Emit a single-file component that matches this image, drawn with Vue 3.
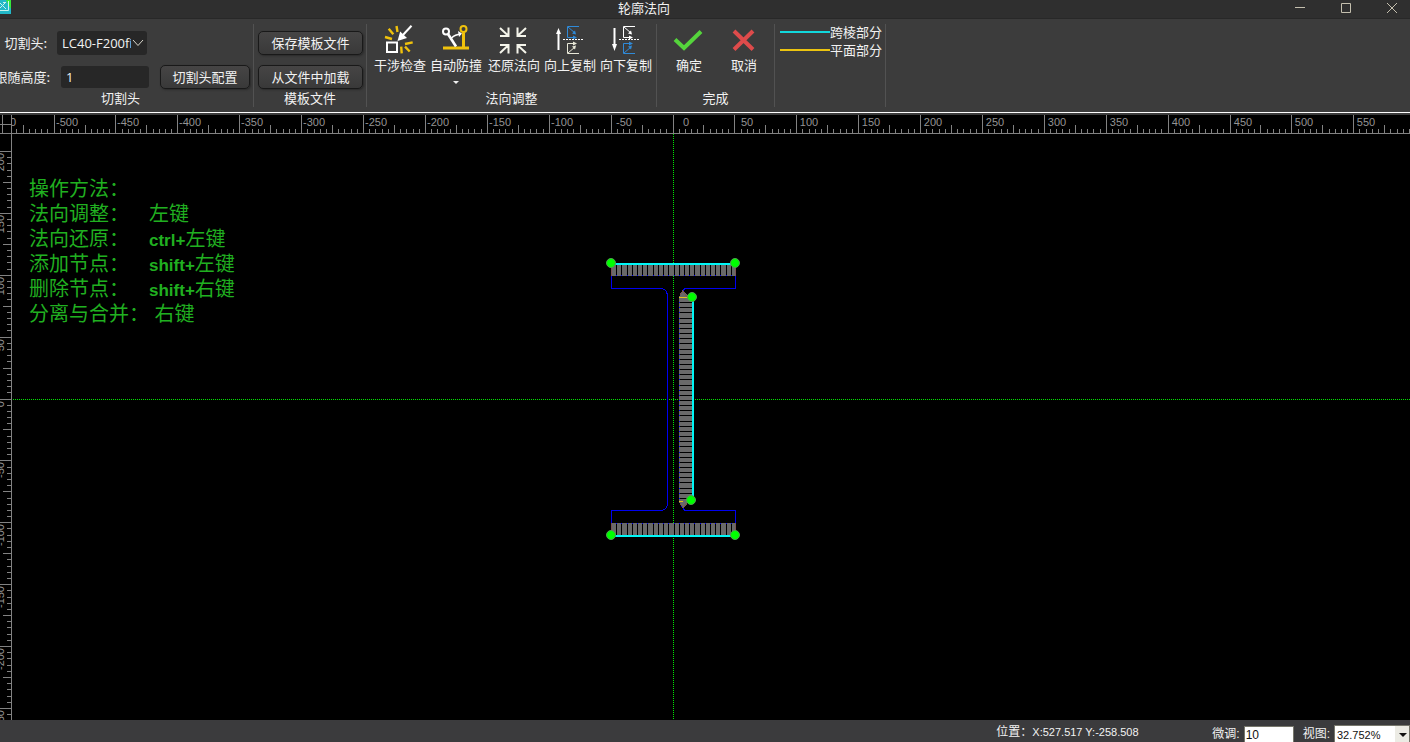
<script setup>
import { ref } from 'vue'

const head = ref('LC40-F200fiber')
const height = ref('1')
const step = ref('10')
const zoom = ref('32.752%')

const ORIGIN_X = 673
const ORIGIN_Y = 284
const STEP = 61.89

const buildTicks = (origin, from, to, sign) => {
  const out = []
  for (let i = from * 10; i <= to * 10; i++) {
    const pos = Math.floor(origin + (sign * i * STEP) / 10)
    const kind = i % 10 === 0 ? 'major' : i % 5 === 0 ? 'mid' : 'minor'
    out.push({ pos, kind, label: kind === 'major' ? String(i * 5) : '' })
  }
  return out
}
const xTicks = buildTicks(ORIGIN_X, -11, 30, 1)
const yTicks = buildTicks(ORIGIN_Y, -20, 4, -1).filter((t) => t.pos > 20)
const xLen = { major: 0, mid: 10, minor: 14 }
const yLen = { major: 0, mid: 3, minor: 7 }

// Hatch bars fill each interval except for a one-pixel gap.
const buildBars = (start, end, count) => {
  const at = (i) => Math.round(start + (i * (end - start)) / count)
  return Array.from({ length: count }, (_, i) => ({ pos: at(i), size: at(i + 1) - at(i) - 1 }))
}
const flangeBars = buildBars(612, 737, 24)
const webBars = buildBars(183, 389, 40)
const nodes = [
  [611, 148], [735, 148], [692, 182], [691, 385], [611, 420], [735, 420],
]

const help = [
  ['操作方法：', '', ''],
  ['法向调整：', '', '左键'],
  ['法向还原：', 'ctrl+', '左键'],
  ['添加节点：', 'shift+', '左键'],
  ['删除节点：', 'shift+', '右键'],
  ['分离与合并：', '', ' 右键'],
]
</script>

<template>
  <div class="window">
    <header class="titlebar">
      <svg class="logo" width="11" height="14" viewBox="0 0 11 14">
        <rect width="11" height="14" fill="#22b8c8" />
        <path d="M6 0H11V9L8 4Z" fill="#35e83a" />
        <path d="M0 10.500H8.500V1M0 3L6 9M5 3L0 8M3 2.500H6" fill="none" stroke="#c8f4ee" />
      </svg>
      <h1>轮廓法向</h1>
      <div class="controls">
        <button aria-label="最小化"><svg width="12" height="12"><path d="M1 5.500H11" /></svg></button>
        <button aria-label="最大化"><svg width="12" height="12"><path d="M1.500 1.500H10.500V10.500H1.500Z" /></svg></button>
        <button aria-label="关闭"><svg width="12" height="12"><path d="M1 1L11 11M11 1L1 11" /></svg></button>
      </div>
    </header>

    <div class="ribbon">
      <section class="group head-group">
        <div class="rows">
          <div class="row">
            <label class="lab1" for="head">切割头:</label>
            <div class="combo">
              <select id="head" v-model="head"><option>LC40-F200fiber</option></select>
              <svg width="12" height="8"><path d="M1 1L6 6.500L11 1" /></svg>
            </div>
          </div>
          <div class="row">
            <label class="lab2" for="height">跟随高度:</label>
            <input id="height" v-model="height" class="field" type="text" />
            <button class="btn config">切割头配置</button>
          </div>
        </div>
        <h2>切割头</h2>
      </section>

      <section class="group file-group">
        <div class="rows">
          <button class="btn">保存模板文件</button>
          <button class="btn">从文件中加载</button>
        </div>
        <h2>模板文件</h2>
      </section>

      <section class="group normal-group">
        <div class="tools">
          <button class="tool">
            <svg width="32" height="32" fill="none">
              <path d="M12.500 2L13.500 8M4.700 4.700L9.300 10.300M1 13L8 15M21 20L28.700 18.300M21 22.700L25.700 27.500M17.200 22.700L17.700 29.300" stroke="#f0c20c" stroke-width="2.400" />
              <rect x="3" y="18.500" width="10" height="9.500" stroke="#fff" stroke-width="2" />
              <path d="M27.500 1.700L18 12" stroke="#fff" stroke-width="2" />
              <path d="M13.500 17L16.200 7.500L23 14Z" fill="#fff" />
            </svg>
            <span>干涉检查</span>
          </button>
          <button class="tool">
            <svg width="32" height="32" fill="none">
              <path d="M3 24H29M23.500 8.500V23" stroke="#f0c20c" stroke-width="3" />
              <circle cx="23.500" cy="5" r="3" stroke="#f0c20c" stroke-width="2" />
              <circle cx="6" cy="7.500" r="3" stroke="#fff" stroke-width="2" />
              <path d="M8 10L16 22.500" stroke="#fff" stroke-width="2.600" />
              <path d="M11.500 14Q15 10.500 21 10" stroke="#fff" stroke-width="1.500" />
              <path d="M18 7L22 9.500L19 13Z" fill="#fff" />
            </svg>
            <span>自动防撞</span>
            <i class="drop"></i>
          </button>
          <button class="tool restore">
            <svg width="32" height="32" fill="none" stroke="#f4f4ea" stroke-width="2">
              <path d="M2 12H10.500V3.500M2 4L10 11.500M28 12H19.500V3.500M28 4L20 11.500M2 21H10.500V29.500M2 29L10 21.500M28 21H19.500V29.500M28 29L20 21.500" />
            </svg>
            <span>还原法向</span>
          </button>
          <button class="tool">
            <svg width="32" height="32" fill="none">
              <path d="M4.500 26V8" stroke="#fff" stroke-width="2" />
              <path d="M2 10L4.500 4L7 10Z" fill="#fff" />
              <g stroke="#2f8ad8">
                <path d="M25 2.500H13.500V13.500H20M14 3L21 9" />
                <path d="M22 10.500L18 9.500L21 6.500ZM23 13.500L19 11.500V15.500Z" fill="#2f8ad8" stroke="none" />
              </g>
              <path d="M9 15.500H30" stroke="#fff" stroke-dasharray="2 1" />
              <g stroke="#e8e8d8">
                <path d="M25 29.500H13.500V19.500H20M14 29L21 23" />
                <path d="M22 21.500L18 22.500L21 25.500ZM23 19.500L19 17.500V21.500Z" fill="#e8e8d8" stroke="none" />
              </g>
            </svg>
            <span>向上复制</span>
          </button>
          <button class="tool">
            <svg width="32" height="32" fill="none">
              <path d="M4.500 4V22" stroke="#fff" stroke-width="2" />
              <path d="M2 20L4.500 27L7 20Z" fill="#fff" />
              <g stroke="#fff">
                <path d="M25 2.500H13.500V13.500H20M14 3L21 9" />
                <path d="M22 10.500L18 9.500L21 6.500ZM23 13.500L19 11.500V15.500Z" fill="#fff" stroke="none" />
              </g>
              <path d="M9 15.500H30" stroke="#fff" stroke-dasharray="2 1" />
              <g stroke="#2f8ad8">
                <path d="M25 29.500H13.500V19.500H20M14 29L21 23" />
                <path d="M22 21.500L18 22.500L21 25.500ZM23 19.500L19 17.500V21.500Z" fill="#2f8ad8" stroke="none" />
              </g>
            </svg>
            <span>向下复制</span>
          </button>
        </div>
        <h2>法向调整</h2>
      </section>

      <section class="group done-group">
        <div class="tools">
          <button class="tool">
            <svg width="32" height="32" fill="none"><path d="M2 15.500L11 24L28 7.500" stroke="#55d43c" stroke-width="4" /></svg>
            <span>确定</span>
          </button>
          <button class="tool">
            <svg width="32" height="32" fill="none"><path d="M6 7L25 25.500M25 7L6 25.500" stroke="#de4b4b" stroke-width="4" /></svg>
            <span>取消</span>
          </button>
        </div>
        <h2>完成</h2>
      </section>

      <section class="group legend">
        <div><i class="edge"></i>跨棱部分</div>
        <div><i class="plane"></i>平面部分</div>
      </section>
    </div>

    <main class="workspace">
      <svg class="drawing" width="100%" height="100%">
        <defs>
          <clipPath id="rulerClip"><rect x="12" y="0" width="100%" height="19" /></clipPath>
        </defs>

        <g class="axis">
          <line :x1="ORIGIN_X + 0.5" y1="19" :x2="ORIGIN_X + 0.5" y2="100%" />
          <line x1="13" :y1="ORIGIN_Y + 0.5" x2="100%" :y2="ORIGIN_Y + 0.5" />
        </g>

        <g class="shade">
          <rect x="612" y="150" width="124" height="11" />
          <rect x="612" y="408" width="124" height="12" />
          <rect x="679" y="183" width="13" height="205" />
        </g>

        <g class="outline">
          <path d="M611.500 149V173.500H662Q667.500 175 667.500 182V388Q667.500 394 662 395.500H611.500V420" />
          <path d="M735.500 149V173.500H685L681 178M735.500 420V395.500H685L681 391M612 160.500H735M612 408.500H735M679.500 182V386" />
        </g>

        <g class="bars">
          <rect v-for="b in flangeBars" :key="'t' + b.pos" :x="b.pos" y="150" :width="b.size" height="11" />
          <rect v-for="b in flangeBars" :key="'b' + b.pos" :x="b.pos" y="408" :width="b.size" height="12" />
          <rect v-for="b in webBars" :key="'w' + b.pos" x="679" :y="b.pos" width="13" :height="b.size" />
          <path d="M679 182L683 176L690 182ZM679 386L683 392L690 386Z" />
        </g>
        <g class="corner">
          <path d="M680 180L683 176M682 175L688 183M680 388L683 393M683 393L689 386M611.500 152V161M735.500 152V161M611.500 408V417M735.500 408V417" />
        </g>
        <path class="flat" d="M679 182.500H688M679 386.500H683" />
        <path class="cut" d="M611 149H735M611 421H735M693 182V385" />
        <g class="nodes">
          <circle v-for="(n, i) in nodes" :key="i" :cx="n[0]" :cy="n[1]" r="4.500" />
        </g>

        <g class="ruler">
          <path d="M0 18.500H12M2.500 0V18M0 9.500H12M11.500 0V18" />
          <line x1="0" y1="18.500" x2="100%" y2="18.500" />
          <line x1="11.500" y1="18" x2="11.500" y2="100%" />
          <g clip-path="url(#rulerClip)">
            <template v-for="t in xTicks" :key="t.pos">
              <line :x1="t.pos + 0.5" :y1="xLen[t.kind]" :x2="t.pos + 0.5" y2="18" />
              <text v-if="t.label" :x="t.pos + 13" y="11" text-anchor="middle">{{ t.label }}</text>
            </template>
          </g>
          <template v-for="t in yTicks" :key="t.pos">
            <line :x1="yLen[t.kind]" :y1="t.pos + 0.5" x2="11" :y2="t.pos + 0.5" />
            <text v-if="t.label" :transform="`translate(4 ${t.pos + 2}) rotate(-90)`" text-anchor="end">{{ t.label }}</text>
          </template>
        </g>
      </svg>

      <ul class="help">
        <li v-for="h in help" :key="h[0]"><span>{{ h[0] }}</span><b>{{ h[1] }}</b>{{ h[2] }}</li>
      </ul>
    </main>

    <footer class="status">
      <output class="position">位置：<span>X:527.517 Y:-258.508</span></output>
      <label for="step">微调:</label>
      <input id="step" v-model="step" type="text" />
      <label for="zoom">视图:</label>
      <div class="zoom">
        <select id="zoom" v-model="zoom"><option>32.752%</option></select>
        <i></i>
      </div>
    </footer>
  </div>
</template>

<style>
body {
  margin: 0;
  background: #000;
}
</style>

<style scoped>
.window {
  display: flex;
  flex-direction: column;
  height: 100vh;
  overflow: hidden;
  background: #3c3c3c;
  color: #f2f2f2;
  font: 13px/18px "Noto Sans CJK SC", sans-serif;
  white-space: nowrap;
}
button, input, select {
  font: inherit;
  color: inherit;
  margin: 0;
  padding: 0;
  border: 0;
  background: none;
  box-sizing: border-box;
  outline: none;
}
select { appearance: none; }
h1, h2 {
  margin: 0;
  font-size: 13px;
  font-weight: 400;
  text-align: center;
}
.titlebar {
  display: flex;
  flex: none;
  height: 18px;
  background: #2f2f2f;
  border-bottom: 1px solid #282828;
}
.titlebar h1 {
  flex: 1;
  line-height: 16px;
}
.controls {
  display: flex;
  margin-right: -5px;
}
.controls button {
  display: flex;
  justify-content: center;
  width: 46px;
  padding-top: 2px;
}
.controls svg {
  fill: none;
  stroke: #c4bfae;
}
.ribbon {
  display: flex;
  flex: none;
  box-sizing: border-box;
  height: 96px;
  padding-top: 5px;
  border-bottom: 2px solid #3c3c3c;
  box-shadow: inset 0 -1px #fff;
}
.group {
  display: flex;
  flex-direction: column;
  justify-content: space-between;
  box-sizing: border-box;
  height: 83px;
  border-right: 1px solid #525252;
}
.group h2 { line-height: 18px; }
.head-group { width: 254px; }
.head-group h2 { padding-right: 12px; }
.file-group { width: 113px; }
.normal-group { width: 290px; }
.done-group { width: 118px; }
.rows {
  display: flex;
  flex-direction: column;
  gap: 10px;
  padding: 7px 3px 0 4px;
}
.head-group .rows { padding-left: 0; }
.row {
  display: flex;
  align-items: center;
  height: 24px;
}
.lab1, .lab2 {
  display: flex;
  justify-content: flex-end;
  flex: none;
}
.lab1 { width: 47px; }
.lab2 { width: 50px; }
.combo {
  position: relative;
  width: 90px;
  height: 24px;
  margin-left: 10px;
}
.combo select {
  width: 100%;
  height: 100%;
  padding: 0 16px 0 5px;
  border-radius: 3px;
  background: #272727;
  font-family: "Open Sans", sans-serif;
}
.combo svg {
  position: absolute;
  top: 8px;
  right: 3px;
  fill: none;
  stroke: #d8d6cc;
}
.field {
  width: 88px;
  height: 22px;
  margin: 0 11px;
  padding-left: 5px;
  border-radius: 3px;
  background: #272727;
  font-family: "Open Sans", sans-serif;
}
.btn {
  height: 24px;
  border: 1px solid #191919;
  border-radius: 5px;
  background: linear-gradient(#464545, #393939);
  box-shadow: 1px 1px 2px #2a2a2a;
}
.config { width: 90px; }
.tools { display: flex; }
.normal-group .tools {
  padding-left: 7px;
  gap: 4px;
}
.done-group .tools {
  padding-left: 6px;
  gap: 3px;
}
.tool {
  display: flex;
  flex-direction: column;
  align-items: center;
  width: 52px;
}
.tool svg { display: block; }
.restore { margin-left: 2px; }
.drop {
  margin-top: 7px;
  border: 3px solid transparent;
  border-top-color: #f0f0f0;
  border-bottom: 0;
}
.legend {
  justify-content: flex-start;
  padding: 0 3px 0 5px;
}
.legend div {
  display: flex;
  align-items: center;
  height: 19px;
  line-height: 18px;
}
.legend div:first-child { height: 16px; }
.legend i {
  width: 50px;
  height: 2px;
}
.edge { background: #12d8dc; }
.plane { background: #ecc410; }
.workspace {
  position: relative;
  flex: 1;
  min-height: 0;
  overflow: hidden;
  background: #000;
}
.drawing {
  position: absolute;
  inset: 0;
  shape-rendering: crispEdges;
}
.axis line {
  stroke: #00e800;
  stroke-dasharray: 1 1;
}
.shade { fill: #000; }
.outline path {
  fill: none;
  stroke: #0000f0;
}
.bars { fill: #696969; }
.corner path {
  fill: none;
  stroke: #795454;
}
.flat {
  stroke: #e0c020;
}
.cut {
  fill: none;
  stroke: #00f6f6;
  stroke-width: 2px;
}
.nodes circle {
  fill: #00ff00;
  stroke: #4f9f4f;
  shape-rendering: auto;
}
.ruler path, .ruler line {
  fill: none;
  stroke: #828282;
}
.ruler text {
  fill: #949494;
  font: 11px "Liberation Sans", sans-serif;
}
.help {
  position: relative;
  margin: 0;
  padding: 62px 0 0 29px;
  list-style: none;
  color: #20b020;
  font: 20px/25px "Liberation Sans", "Noto Sans CJK SC", sans-serif;
}
.help li {
  height: 25px;
  white-space: pre;
}
.help b { font-size: 17px; }
.help span {
  display: inline-block;
  min-width: 120px;
}
.status {
  display: flex;
  flex: none;
  justify-content: flex-end;
  align-items: flex-start;
  height: 22px;
  overflow: hidden;
  background: #3b3b3d;
  font: 12px/18px "Liberation Sans", "Noto Sans CJK SC", sans-serif;
}
.position {
  width: 216px;
  padding-top: 3px;
}
.position span { font-size: 11px; }
.status label { padding-top: 5px; }
.status input {
  width: 50px;
  height: 20px;
  margin: 6px 9px 0 4px;
  padding: 0 0 3px 1px;
  border: 1px solid #77776c;
  background: #fff;
  color: #111;
}
.zoom {
  position: relative;
  width: 76px;
  height: 20px;
  margin: 5px 0 0 4px;
}
.zoom select {
  width: 100%;
  height: 100%;
  padding: 0 0 3px 2px;
  border: 1px solid #77776c;
  background: linear-gradient(to left, #ecebe4 14px, #fff 14px);
  color: #111;
  font-size: 11px;
}
.zoom i {
  position: absolute;
  top: 8px;
  right: 3px;
  border: 4px solid transparent;
  border-top-color: #111;
  border-bottom: 0;
}
</style>
